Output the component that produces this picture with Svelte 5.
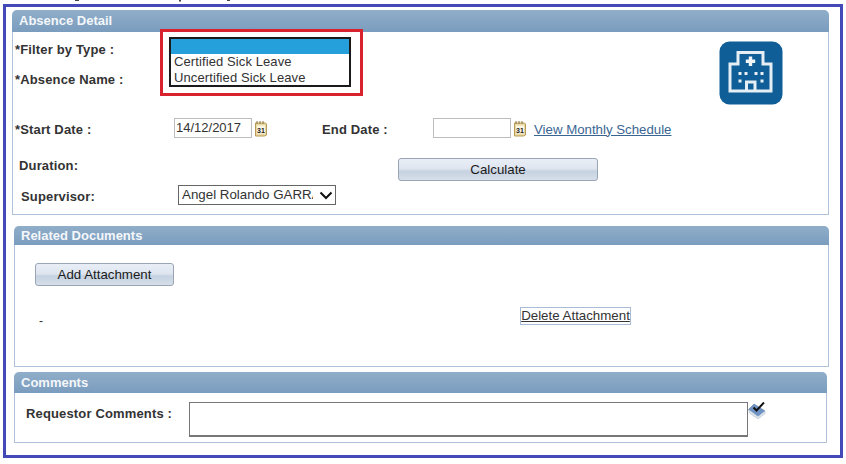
<script>
	const options = ['', 'Certified Sick Leave', 'Uncertified Sick Leave'];
</script>

{#snippet calendar()}
	<svg class="cal" width="14" height="17" viewBox="0 0 14 17">
		<path d="M1.5 3h10l1 1v11l-2 1h-9z" fill="#e9d9a4" stroke="#b79a56" />
		<rect x="3" y="5.5" width="8" height="8" fill="#fbf6e2" />
		<path d="M3 1v3M6 1v3M9 1v3" stroke="#8a7440" />
		<text x="7" y="12.5" class="cal-num">31</text>
	</svg>
{/snippet}

<svg class="crop" width="240" height="4" viewBox="0 0 240 4">
	<path d="M75 0h4v1h-4zM179 0h2v1.500h-2zM227 0h3v1h-3z" fill="#444" />
</svg>

<div class="frame">
	<section class="panel detail">
		<h2>Absence Detail</h2>
		<div class="body">
			<div class="top">
				<div class="labels">
					<label>*Filter by Type :</label>
					<label>*Absence Name :</label>
				</div>
				<div class="listwrap">
					<div class="list">
						{#each options as opt, i}
							<div class="opt" class:sel={i === 0}>{opt}</div>
						{/each}
					</div>
				</div>
				<div class="hospital">
					<svg width="64" height="64" viewBox="0 0 64 64">
						<rect x="0.5" y="0.5" width="63" height="63" rx="10" fill="#0f5e97" />
						<g fill="none" stroke="#e6eef5" stroke-width="3">
							<path d="M19 23V11.500h25V23h8v27H11V23z" />
							<path d="M27.500 50V41h8.500v9" />
						</g>
						<path d="M29.800 15.500h3.400v3h3v3.400h-3v3h-3.400v-3h-3v-3.400h3z" fill="#f2f6f9" />
						<g fill="#eaf1f6">
							<rect x="19.500" y="31" width="3" height="3" />
							<rect x="25.500" y="31" width="3" height="3" />
							<rect x="35.500" y="31" width="3" height="3" />
							<rect x="41.500" y="31" width="3" height="3" />
							<rect x="19.500" y="38.500" width="3" height="3" />
							<rect x="41.500" y="38.500" width="3" height="3" />
						</g>
					</svg>
				</div>
			</div>
			<div class="row dates">
				<label class="start">*Start Date :</label>
				<input class="date" value="14/12/2017" />
				{@render calendar()}
				<label class="end">End Date :</label>
				<input class="date" />
				{@render calendar()}
				<a href="#schedule" class="link">View Monthly Schedule</a>
			</div>
			<div class="row calc">
				<label class="duration">Duration:</label>
				<button class="btn calculate">Calculate</button>
			</div>
			<div class="row super">
				<label class="supervisor">Supervisor:</label>
				<div class="selwrap">
					<select><option>Angel Rolando GARRA</option></select>
					<svg width="14" height="9" viewBox="0 0 14 9"><path d="M1.500 1.500 7 7l5.500-5.500" fill="none" stroke="#111" stroke-width="2" /></svg>
				</div>
			</div>
		</div>
	</section>

	<section class="panel docs">
		<h2>Related Documents</h2>
		<div class="body">
			<button class="btn add">Add Attachment</button>
			<div class="row files">
				<span class="dash">-</span>
				<a href="#delete" class="del">Delete Attachment</a>
			</div>
		</div>
	</section>

	<section class="panel comments">
		<h2>Comments</h2>
		<div class="body">
			<label class="req">Requestor Comments :</label>
			<textarea></textarea>
			<svg class="spell" width="18" height="17" viewBox="0 0 18 17">
				<path d="M0.500 7.500 6 2l11 7-7 5.500z" fill="#6f92c4" stroke="#5f7fa9" stroke-width="0.600" />
				<path d="M0.500 7.500 10 14.500l7-5.500v2.500L10 17 1.500 11z" fill="#dfe6ee" stroke="#9db2c8" stroke-width="0.500" />
				<path d="M5.500 5.500l3 3L16 0.500" fill="none" stroke="#111" stroke-width="2" />
			</svg>
		</div>
	</section>
</div>

<style>
	:global(body) {
		margin: 0;
		background: #fff;
		font-family: 'Liberation Sans', Arial, sans-serif;
	}

	.crop {
		display: block;
	}

	.frame {
		box-sizing: border-box;
		width: 840px;
		height: 454px;
		margin-left: 3px;
		border: 3px solid #4349b6;
		padding-top: 3px;
	}

	.panel {
		box-sizing: border-box;
	}

	h2 {
		margin: 0;
		box-sizing: border-box;
		padding-left: 7px;
		color: #f4f7fa;
		font-size: 13px;
		font-weight: bold;
		border-radius: 5px 5px 0 0;
		background: linear-gradient(#90aec9, #7a9cbe);
	}

	.body {
		box-sizing: border-box;
		border: 1px solid #b0c2da;
		border-top: 0;
		background: #fff;
	}

	.detail {
		width: 817px;
		margin-left: 6px;
	}

	.detail h2 {
		height: 22px;
		line-height: 21px;
	}

	.detail .body {
		height: 183px;
		padding-left: 2px;
	}

	label {
		font-size: 13px;
		font-weight: bold;
		color: #333;
		letter-spacing: 0.15px;
	}

	.top {
		display: flex;
		height: 72px;
	}

	.labels {
		width: 145px;
		display: flex;
		flex-direction: column;
		padding-top: 10px;
		gap: 15px;
	}

	.labels label {
		line-height: 15px;
		white-space: nowrap;
	}

	.listwrap {
		box-sizing: border-box;
		width: 203px;
		height: 67px;
		margin-top: -3px;
		border: 3px solid #d8222d;
		padding: 5px 0 0 6px;
	}

	.list {
		box-sizing: border-box;
		width: 182px;
		height: 50px;
		border: 2px solid #1a1a1a;
		background: #fff;
	}

	.opt {
		height: 16px;
		padding-left: 3px;
		font-size: 13px;
		letter-spacing: 0.1px;
		line-height: 15px;
		color: #333;
	}

	.opt.sel {
		height: 15px;
		background: #26a0da;
	}

	.hospital {
		margin: 9px 0 0 356px;
	}

	.hospital svg {
		display: block;
	}

	.row {
		display: flex;
		align-items: center;
	}

	.dates {
		height: 20px;
		margin-top: 14px;
	}

	.dates label,
	.link {
		padding-top: 2px;
	}

	.start {
		width: 159px;
	}

	.date {
		box-sizing: border-box;
		width: 78px;
		height: 20px;
		padding: 0 0 2px 1px;
		border: 1px solid #bdbdbd;
		font: 13px 'Liberation Sans', Arial, sans-serif;
		color: #333;
		outline: 0;
	}

	.cal {
		margin-left: 2px;
		flex: none;
	}

	.cal-num {
		font-size: 7px;
		font-weight: bold;
		text-anchor: middle;
		fill: #222;
	}

	.end {
		width: 111px;
		margin-left: 54px;
	}

	.link {
		margin-left: 7px;
		font-size: 13.250px;
		color: #3a6592;
	}

	.calc {
		height: 23px;
		margin-top: 20px;
	}

	.duration {
		width: 379px;
		padding-left: 4px;
		margin-top: -8px;
	}

	.btn {
		box-sizing: border-box;
		height: 23px;
		padding: 0;
		border: 1px solid #9aa5b3;
		border-radius: 3px;
		font: 13.300px 'Liberation Sans', Arial, sans-serif;
		color: #1a1a1a;
		background: linear-gradient(#e9eef6 0%, #dfe6f0 45%, #c6d2e1 58%, #d6dfea 100%);
	}

	.calculate {
		width: 200px;
	}

	.super {
		height: 20px;
		margin-top: 4px;
	}

	.supervisor {
		width: 157px;
		padding: 2px 0 0 6px;
	}

	.selwrap {
		position: relative;
		width: 158px;
		height: 20px;
	}

	select {
		appearance: none;
		box-sizing: border-box;
		width: 100%;
		height: 20px;
		padding: 0 22px 1px 3px;
		border: 1px solid #666;
		border-radius: 0;
		background: #fff;
		font: 13.330px 'Liberation Sans', Arial, sans-serif;
		color: #333;
	}

	.selwrap svg {
		position: absolute;
		right: 3px;
		top: 6px;
	}

	.docs {
		width: 815px;
		margin: 11px 0 0 8px;
	}

	.docs h2 {
		height: 19px;
		line-height: 19px;
	}

	.docs .body {
		height: 122px;
		padding: 18px 0 0 20px;
	}

	.add {
		display: block;
		width: 139px;
	}

	.files {
		margin-top: 21px;
		height: 18px;
	}

	.dash {
		width: 481px;
		padding: 10px 0 0 4px;
		font-size: 12px;
		color: #333;
	}

	.del {
		box-sizing: border-box;
		width: 111px;
		height: 18px;
		border: 1px solid #a9bcd6;
		font-size: 13.300px;
		line-height: 15px;
		color: #333;
		text-align: center;
		white-space: nowrap;
	}

	.comments {
		width: 813px;
		margin: 5px 0 0 8px;
	}

	.comments h2 {
		height: 21px;
		line-height: 22px;
	}

	.comments .body {
		height: 50px;
		display: flex;
		align-items: flex-start;
		padding: 9px 0 0 11px;
	}

	.req {
		width: 163px;
		line-height: 24px;
	}

	textarea {
		box-sizing: border-box;
		width: 559px;
		height: 35px;
		margin: 0;
		border: 1px solid #777;
		border-width: 1px 1px 2px;
		resize: none;
		outline: 0;
	}
</style>
